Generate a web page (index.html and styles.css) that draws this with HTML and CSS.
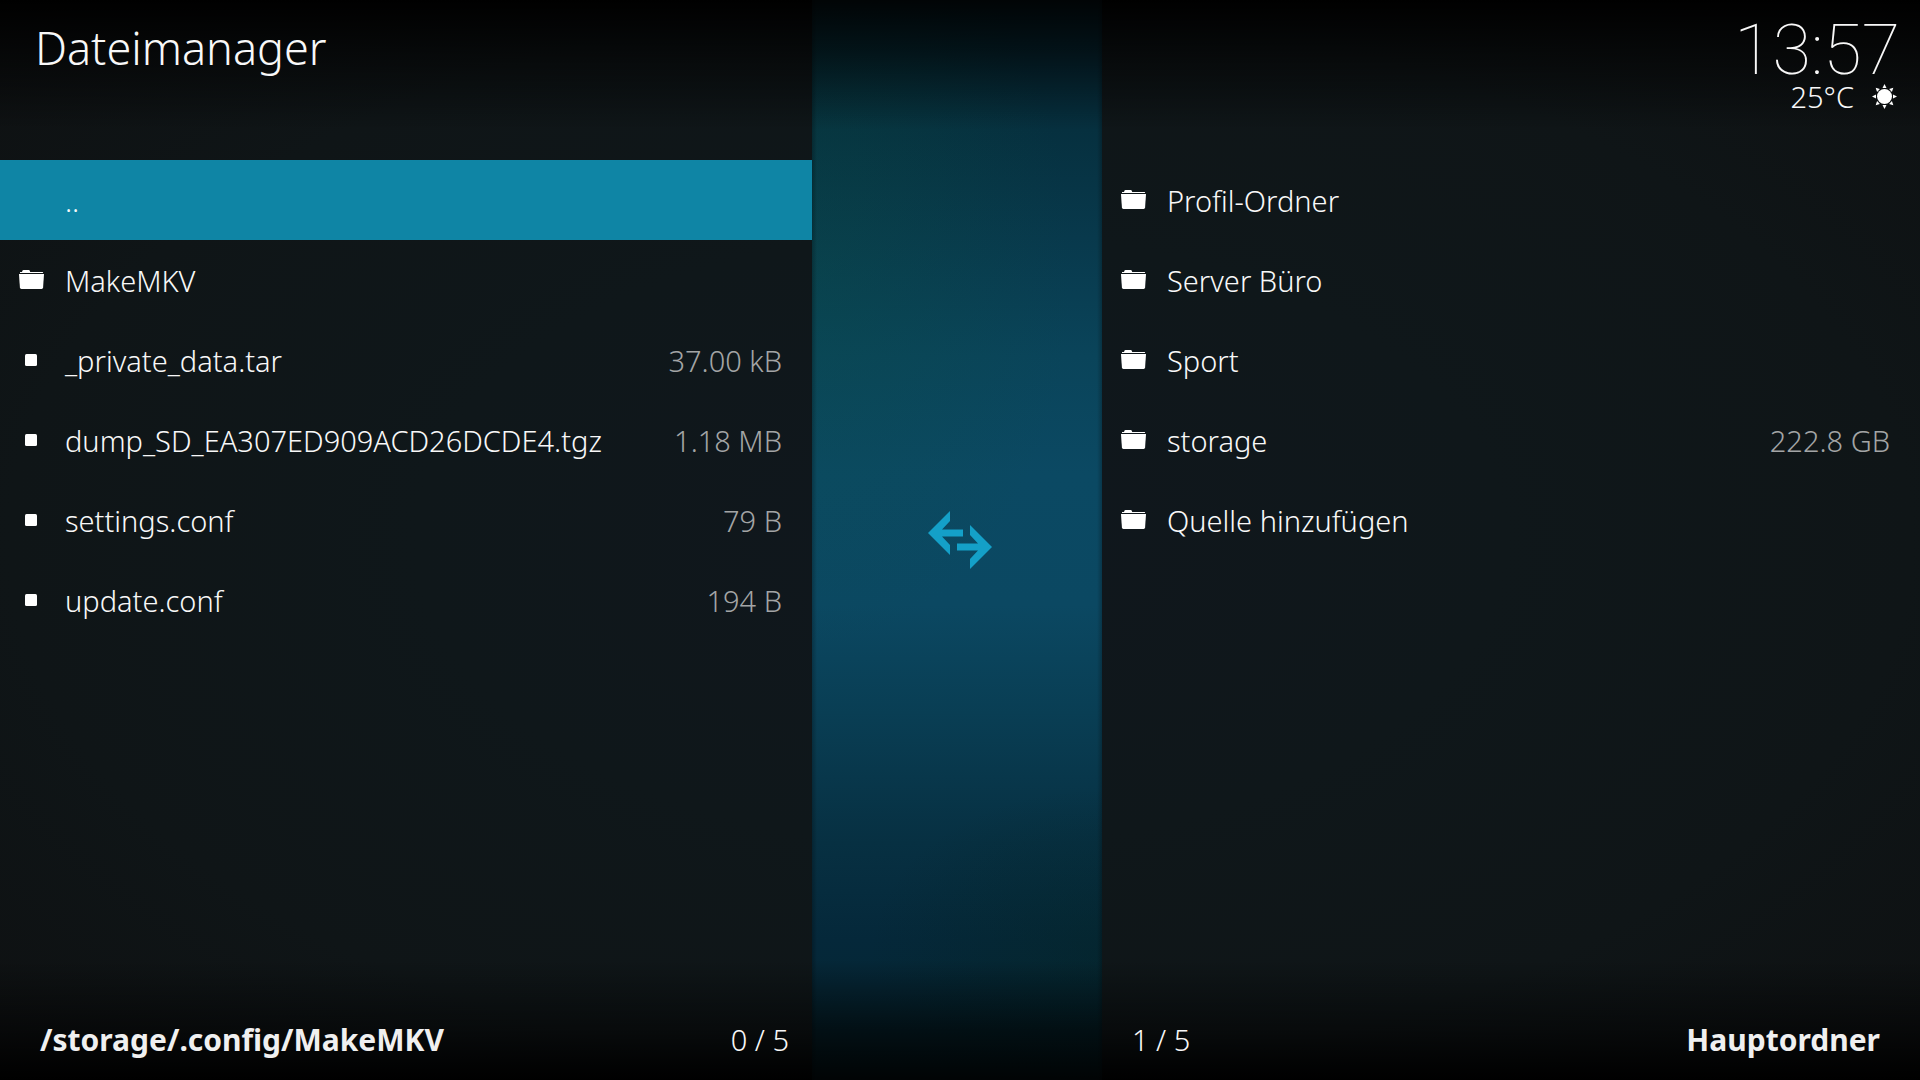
FILE: index.html
```html
<!DOCTYPE html>
<html lang="de">
<head>
    <meta charset="UTF-8">
    <title>Dateimanager</title>
    <link rel="stylesheet" href="styles.css">
</head>
<body>
    <svg class="sprite" aria-hidden="true">
        <symbol id="folder" viewBox="0 0 25 20">
            <path d="M1 3V2h2L3.500 .6Q3.800 0 4.500 0h5.300q.7 0 .9.600L11.200 2H23.500q.6 0 .6.600V3z"/>
            <path d="M0 4h25l-.9 13.600q-.1 1.400-1.500 1.400H2.400Q1 19 .9 17.600z"/>
        </symbol>
        <symbol id="file" viewBox="0 0 25 20">
            <rect x="6" y="4" width="12" height="12" rx="1.500"/>
        </symbol>
    </svg>

    <main class="manager">
        <!--linke Seite-->
        <section class="pane">
            <header class="top">
                <h1>Dateimanager</h1>
            </header>
            <ul class="list">
                <li><a class="row current" href="#"><span class="icon"></span><span class="name">..</span></a></li>
                <li><a class="row" href="#"><svg class="icon"><use href="#folder"/></svg><span class="name">MakeMKV</span></a></li>
                <li><a class="row" href="#"><svg class="icon"><use href="#file"/></svg><span class="name">_private_data.tar</span><span class="size">37.00 kB</span></a></li>
                <li><a class="row" href="#"><svg class="icon"><use href="#file"/></svg><span class="name">dump_SD_EA307ED909ACD26DCDE4.tgz</span><span class="size">1.18 MB</span></a></li>
                <li><a class="row" href="#"><svg class="icon"><use href="#file"/></svg><span class="name">settings.conf</span><span class="size">79 B</span></a></li>
                <li><a class="row" href="#"><svg class="icon"><use href="#file"/></svg><span class="name">update.conf</span><span class="size">194 B</span></a></li>
            </ul>
            <footer class="bottom">
                <strong>/storage/.config/MakeMKV</strong>
                <span>0 / 5</span>
            </footer>
        </section>

        <div class="middle">
            <svg class="arrows" viewBox="0 0 64 58" aria-hidden="true">
                <path d="M0 22L22 0V10L14 18.500H35V25.500H14L22 34V44z"/>
                <path d="M64 36L42 14V24L50 32.500H29V39.500H50L42 48V58z"/>
            </svg>
        </div>

        <!--rechte Seite-->
        <section class="pane">
            <header class="top status">
                <time class="clock">13:57</time>
                <div class="weather">
                    <span>25°C</span>
                    <svg class="sun" viewBox="0 0 25 25" aria-hidden="true">
                        <circle cx="12.500" cy="12.500" r="7.500"/>
                        <path id="ray" d="M12.500 0L14.500 4H10.500z"/>
                        <use href="#ray" transform="rotate(45 12.500 12.500)"/>
                        <use href="#ray" transform="rotate(90 12.500 12.500)"/>
                        <use href="#ray" transform="rotate(135 12.500 12.500)"/>
                        <use href="#ray" transform="rotate(180 12.500 12.500)"/>
                        <use href="#ray" transform="rotate(225 12.500 12.500)"/>
                        <use href="#ray" transform="rotate(270 12.500 12.500)"/>
                        <use href="#ray" transform="rotate(315 12.500 12.500)"/>
                    </svg>
                </div>
            </header>
            <ul class="list">
                <li><a class="row" href="#"><svg class="icon"><use href="#folder"/></svg><span class="name">Profil-Ordner</span></a></li>
                <li><a class="row" href="#"><svg class="icon"><use href="#folder"/></svg><span class="name">Server Büro</span></a></li>
                <li><a class="row" href="#"><svg class="icon"><use href="#folder"/></svg><span class="name">Sport</span></a></li>
                <li><a class="row" href="#"><svg class="icon"><use href="#folder"/></svg><span class="name">storage</span><span class="size">222.8 GB</span></a></li>
                <li><a class="row" href="#"><svg class="icon"><use href="#folder"/></svg><span class="name">Quelle hinzufügen</span></a></li>
            </ul>
            <footer class="bottom">
                <span>1 / 5</span>
                <strong>Hauptordner</strong>
            </footer>
        </section>
    </main>
</body>
</html>
```
FILE: styles.css
```css
*{
    margin: 0;
    padding: 0;
    box-sizing: border-box;
}
body{
    background-color: #0f1518;
    color: #f8f8f8;
    font-family: "Noto Sans", sans-serif;
    font-size: 29px;
    font-weight: 300;
    line-height: 40px;
}
ul{
    list-style: none;
}
a{
    color: inherit;
    text-decoration: none;
}
svg{
    fill: #fff;
}
.sprite{
    display: none;
}
.manager{
    display: grid;
    grid-template-columns: 812fr 290fr 818fr;
    min-height: 100vh;
    background:
        linear-gradient(to bottom, #000 0, rgba(0,0,0,0.6) 50px, rgba(0,0,0,0) 130px),
        linear-gradient(to top, #000 0, rgba(0,0,0,0.5) 50px, rgba(0,0,0,0) 120px),
        radial-gradient(ellipse at center, #10171d 0, #0f171a 40%, #0f1517 70%, #0e1011 100%);
}
.pane{
    display: flex;
    flex-direction: column;
    min-width: 0;
}

/*Kopfzeile*/
.top{
    height: 160px;
    padding: 16px 20px 0 35px;
}
h1{
    font-size: 45px;
    font-weight: 300;
    line-height: 64px;
}
.status{
    display: flex;
    flex-direction: column;
    align-items: flex-end;
}
.clock{
    font-family: Roboto, sans-serif;
    font-size: 70px;
    font-weight: 100;
    line-height: 68px;
}
.weather{
    display: flex;
    align-items: center;
    gap: 18px;
    padding-right: 3px;
    line-height: 24px;
}
.sun{
    width: 25px;
    height: 25px;
}

/*Dateilisten*/
.list{
    flex: 1;
}
.row{
    display: flex;
    align-items: center;
    height: 80px;
    padding: 0 30px 0 19px;
}
.row.current{
    background-color: #0f85a5;
}
.icon{
    flex: none;
    width: 25px;
    height: 20px;
    margin-right: 21px;
}
.name{
    flex: 1;
    padding-top: 2px;
    white-space: nowrap;
}
.size{
    padding-top: 2px;
    color: #a3a5a6;
}

/*Mitte*/
.middle{
    display: flex;
    align-items: center;
    justify-content: center;
    padding-left: 6px;
    background:
        linear-gradient(to right, rgba(0,0,0,0.25), rgba(0,0,0,0) 5px, rgba(0,0,0,0) calc(100% - 5px), rgba(0,0,0,0.25)),
        linear-gradient(to bottom, rgba(0,0,0,0.9) 0, rgba(0,0,0,0.6) 50px, rgba(0,0,0,0) 130px),
        linear-gradient(to top, rgba(0,0,0,0.9) 0, rgba(0,0,0,0.6) 50px, rgba(0,0,0,0) 120px),
        radial-gradient(ellipse 90% 35% at 0 25%, rgba(10,80,70,0.3), rgba(10,80,70,0)),
        radial-gradient(ellipse 80% 15% at 100% 88%, rgba(4,36,38,0.5), rgba(4,36,38,0)),
        linear-gradient(to bottom, #062a38 0, #06303f 12%, #08394c 22%, #0a445a 33%, #0b4963 44%, #0b4862 56%, #093e54 66%, #073042 78%, #05283a 87%, #05252f 100%);
}
.arrows{
    width: 64px;
    height: 58px;
    fill: #14a0c8;
}

.bottom{
    display: flex;
    justify-content: space-between;
    padding: 0 40px 20px 30px;
}
.pane:first-child .bottom{
    padding: 0 23px 20px 40px;
}
strong{
    color: #f0f0f0;
    font-size: 30px;
    font-weight: 700;
}
```
